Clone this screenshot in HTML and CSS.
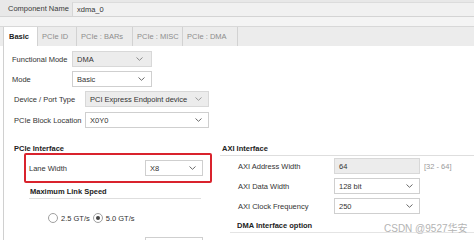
FILE: index.html
```html
<!DOCTYPE html>
<html>
<head>
<meta charset="utf-8">
<link rel="stylesheet" href="styles.css">
</head>
<body>
<div class="screen">
  <div class="top">
    <span class="cn-label">Component Name</span>
    <div class="cn-input">xdma_0</div>
  </div>
  <div class="strip"></div>
  <div class="tabs">
    <div class="tab active t1">Basic</div>
    <div class="tab t2">PCIe ID</div>
    <div class="tab t3">PCIe : BARs</div>
    <div class="tab t4">PCIe : MISC</div>
    <div class="tab t5">PCIe : DMA</div>
  </div>
  <div class="panel">
    <div class="row r1">
      <span class="label w60">Functional Mode</span>
      <div class="select grey w80"><span>DMA</span><svg class="chev" width="7" height="4" viewBox="0 0 7 4"><polyline points="0.5,0.5 3.5,3.3 6.5,0.5" fill="none" stroke="#8a8a8a" stroke-width="1"/></svg></div>
    </div>
    <div class="row r2">
      <span class="label w60">Mode</span>
      <div class="select w80"><span>Basic</span><svg class="chev" width="7" height="4" viewBox="0 0 7 4"><polyline points="0.5,0.5 3.5,3.3 6.5,0.5" fill="none" stroke="#6a6a6a" stroke-width="1"/></svg></div>
    </div>
    <div class="row r3">
      <span class="label w71">Device / Port Type</span>
      <div class="select grey w124"><span>PCI Express Endpoint device</span><svg class="chev" width="7" height="4" viewBox="0 0 7 4"><polyline points="0.5,0.5 3.5,3.3 6.5,0.5" fill="none" stroke="#9a9a9a" stroke-width="1"/></svg></div>
    </div>
    <div class="row r4">
      <span class="label w71">PCIe Block Location</span>
      <div class="select w124"><span>X0Y0</span><svg class="chev" width="7" height="4" viewBox="0 0 7 4"><polyline points="0.5,0.5 3.5,3.3 6.5,0.5" fill="none" stroke="#6a6a6a" stroke-width="1"/></svg></div>
    </div>
    <div class="cols">
      <div class="col-left">
        <div class="heading left-heading">PCIe Interface</div>
        <div class="highlight">
          <span class="label w116">Lane Width</span>
          <div class="select w58"><span>X8</span><svg class="chev" width="7" height="4" viewBox="0 0 7 4"><polyline points="0.5,0.5 3.5,3.3 6.5,0.5" fill="none" stroke="#6a6a6a" stroke-width="1"/></svg></div>
        </div>
        <div class="heading sub-heading speed">Maximum Link Speed</div>
        <div class="radios">
          <span class="radio"></span><span class="radio-text">2.5 GT/s</span>
          <span class="radio on"><span class="dot"></span></span><span class="radio-text">5.0 GT/s</span>
        </div>
        <div class="select w58 bottom-box"></div>
      </div>
      <div class="col-right">
        <div class="heading right-heading">AXI Interface</div>
        <div class="row axi first">
          <span class="label w96">AXI Address Width</span>
          <div class="select grey w86"><span>64</span></div>
          <span class="range">[32 - 64]</span>
        </div>
        <div class="row axi">
          <span class="label w96">AXI Data Width</span>
          <div class="select w86"><span>128 bit</span><svg class="chev" width="7" height="4" viewBox="0 0 7 4"><polyline points="0.5,0.5 3.5,3.3 6.5,0.5" fill="none" stroke="#6a6a6a" stroke-width="1"/></svg></div>
        </div>
        <div class="row axi">
          <span class="label w96">AXI Clock Frequency</span>
          <div class="select w86"><span>250</span><svg class="chev" width="7" height="4" viewBox="0 0 7 4"><polyline points="0.5,0.5 3.5,3.3 6.5,0.5" fill="none" stroke="#6a6a6a" stroke-width="1"/></svg></div>
        </div>
        <div class="heading sub-heading dma">DMA Interface option</div>
      </div>
    </div>
  </div>
  <div class="watermark">CSDN @9527华安</div>
</div>
</body>
</html>
```

FILE: styles.css
```css
* { box-sizing: border-box; }
html, body { margin: 0; padding: 0; background: #fff; }
body {
  font-family: "Liberation Sans", Arial, "Noto Sans CJK SC", sans-serif;
  font-size: 7.5px;
  color: #333;
}
.screen {
  position: relative;
  width: 474px;
  height: 240px;
  overflow: hidden;
  background: #fff;
}
.top {
  display: flex;
  height: 17px;
  background: #e8e8e8;
  border-bottom: 1px solid #d4d4d4;
}
.cn-label {
  width: 72px;
  padding-left: 8px;
  line-height: 17px;
  color: #3a3a3a;
}
.cn-input {
  flex: 1;
  margin-top: 2px;
  background: #f1f1f1;
  border-left: 1px solid #d6d6d6;
  border-top: 1px solid #dcdcdc;
  padding-left: 4px;
  line-height: 13px;
  color: #333;
}
.strip {
  height: 10px;
  background: #f4f4f4;
  border-bottom: 1px solid #d8d8d8;
}
.tabs {
  display: flex;
  height: 19px;
  background: #ececec;
  padding-left: 3px;
}
.tab {
  line-height: 19px;
  padding-left: 4px;
  color: #8c8c8c;
  border-right: 1px solid #d2d2d2;
}
.tab.active {
  background: #fff;
  color: #222;
  font-weight: bold;
  padding-left: 5px;
  border-left: 1px solid #d2d2d2;
}
.t1 { width: 35px; }
.t2 { width: 39px; }
.t3 { width: 56px; }
.t4 { width: 50px; }
.t5 { width: 55px; }
.panel {
  margin-left: 3px;
  border-left: 1px solid #d0d0d0;
  height: 194px;
  padding-top: 5px;
}
.row {
  display: flex;
  align-items: center;
  height: 16px;
}
.r1, .r2 { padding-left: 8px; margin-bottom: 4px; }
.r3 { padding-left: 10px; margin-bottom: 5px; }
.r4 { padding-left: 10px; }
.label { color: #333; white-space: nowrap; }
.w60 { width: 60px; }
.w71 { width: 71px; }
.w96 { width: 96px; }
.w116 { width: 116px; }
.select {
  height: 16px;
  border: 1px solid #cfcfcf;
  background: #fff;
  display: flex;
  align-items: center;
  justify-content: space-between;
  padding: 0 6px 0 4px;
  color: #333;
  white-space: nowrap;
}
.select.grey { background: #ececec; border-color: #d8d8d8; }
.w80 { width: 80px; }
.w124 { width: 124px; }
.w58 { width: 58px; }
.w86 { width: 86px; }
.chev { display: block; flex: none; }
.r1 .chev { margin-right: 2px; }
.cols {
  display: flex;
  margin-top: 15px;
}
.col-left { width: 216px; }
.col-right { flex: 1; }
.heading { font-weight: bold; color: #222; white-space: nowrap; }
.left-heading {
  height: 10px;
  line-height: 12px;
  padding-left: 10px;
}
.highlight {
  margin-left: 20px;
  width: 188px;
  height: 30px;
  border: 2px solid #d9232d;
  border-radius: 2px;
  display: flex;
  align-items: center;
  padding-left: 3px;
}
.speed {
  margin: 3px 0 0 25px;
  width: 172px;
  height: 13px;
  line-height: 12px;
  padding-left: 1px;
  border-bottom: 1px solid #dedede;
}
.radios {
  display: flex;
  align-items: center;
  height: 12px;
  margin: 13px 0 0 44px;
}
.radio {
  width: 10px;
  height: 10px;
  border: 1px solid #a0a0a0;
  border-radius: 50%;
  background: #fff;
  display: flex;
  align-items: center;
  justify-content: center;
}
.radio .dot {
  width: 4px;
  height: 4px;
  border-radius: 50%;
  background: #444;
}
.radio-text { margin: 0 3px 0 3px; color: #333; }
.bottom-box { margin: 13px 0 0 141px; }
.right-heading {
  height: 13px;
  line-height: 12px;
  padding-left: 2px;
  border-bottom: 1px solid #dedede;
}
.axi { padding-left: 18px; margin-bottom: 4px; }
.axi.first { margin-top: 2px; }
.range { margin-left: 4px; color: #9a9a9a; }
.dma {
  margin: 6px 0 0 10px;
  height: 13px;
  line-height: 12px;
  padding-left: 7px;
  border-bottom: 1px solid #e4e4e4;
}
.watermark {
  position: absolute;
  left: 384px;
  top: 223px;
  font-size: 10px;
  line-height: 12px;
  color: #b4b4b4;
  white-space: nowrap;
  text-shadow: 0 0 1px #fff;
}
```
